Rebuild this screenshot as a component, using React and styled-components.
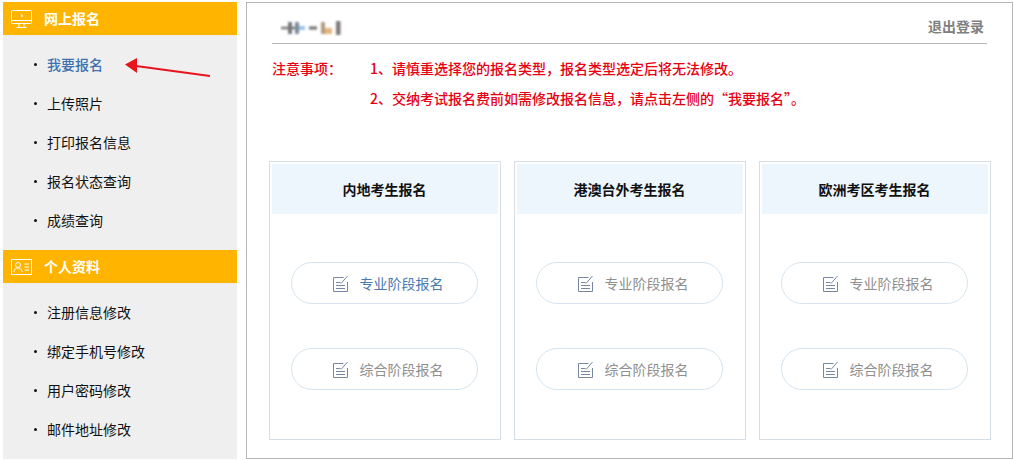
import React from "react";
import styled, { createGlobalStyle } from "styled-components";

const Global = createGlobalStyle`
  html, body {
    margin: 0;
    padding: 0;
    background: #fff;
    overflow: hidden;
    font-family: "Noto Sans CJK SC", "Liberation Sans", sans-serif;
  }
`;

const Page = styled.div`
  width: 1014px;
  height: 460px;
  box-sizing: border-box;
  padding: 2px 2px 1px 3px;
  display: flex;
  gap: 9px;
`;

const Sidebar = styled.aside`
  position: relative;
  width: 234px;
  flex: none;
  background: #efefef;
`;

const MenuHead = styled.div`
  height: 33px;
  background: #ffb400;
  display: flex;
  align-items: center;
  padding-left: 7px;
  gap: 10px;
  color: #fff;
  font-size: 14px;
  font-weight: 700;
`;

const MenuTitle = styled.span`
  margin-top: -2px;
`;

const MenuList = styled.ul`
  list-style: none;
  margin: 0;
  padding: 9px 0 11px;
`;

const MenuItem = styled.li`
  height: 39px;
  display: flex;
  align-items: center;
  padding-left: 31px;
  font-size: 14px;
  font-weight: ${(p) => (p.$active ? 500 : 400)};
  color: ${(p) => (p.$active ? "#3f72af" : "#111")};

  &::before {
    content: "";
    width: 3px;
    height: 3px;
    border-radius: 50%;
    background: #111;
    margin-right: 10px;
    margin-top: 2px;
  }
`;

const Arrow = styled.svg`
  position: absolute;
  left: 120px;
  top: 55px;
`;

const Main = styled.main`
  flex: 1;
  border: 1px solid #b5b5b5;
  box-sizing: border-box;
  padding: 0 21px 18px 22px;
  display: flex;
  flex-direction: column;
`;

const TopBar = styled.div`
  height: 41px;
  box-sizing: border-box;
  margin: 0 4px 0 3px;
  border-bottom: 1px solid #b5b5b5;
  display: flex;
  align-items: center;
  justify-content: space-between;
  padding: 6px 3px 0 8px;
`;

const BlurLogo = styled.svg`
  margin-top: 4px;
`;

const Logout = styled.span`
  font-size: 14px;
  font-weight: 700;
  color: #808080;
`;

const Notes = styled.div`
  margin: 9px 0 0 3px;
  height: 108px;
  display: grid;
  grid-template-columns: 98px 1fr;
  grid-auto-rows: 30px;
  align-content: start;
  align-items: center;
  color: #e60012;
  font-size: 14px;
  font-weight: 500;
`;

const NoteText = styled.div`
  grid-column: 2;
  line-height: 24px;
`;

const Cards = styled.div`
  flex: 1;
  display: flex;
  gap: 13px;
`;

const Card = styled.section`
  width: 232px;
  box-sizing: border-box;
  border: 1px solid #d5dde5;
  padding: 2px;
  display: flex;
  flex-direction: column;
  align-items: center;
`;

const CardTitle = styled.div`
  align-self: stretch;
  height: 50px;
  box-sizing: border-box;
  padding-right: 1px;
  background: #edf5fd;
  display: flex;
  align-items: center;
  justify-content: center;
  font-size: 14px;
  font-weight: 700;
  color: #111;
  margin-bottom: 48px;
`;

const Pill = styled.div`
  width: 187px;
  height: 42px;
  box-sizing: border-box;
  border: 1px solid #d5e4f0;
  border-radius: 21px;
  padding-left: 6px;
  display: flex;
  align-items: center;
  justify-content: center;
  gap: 11px;
  font-size: 14px;
  color: ${(p) => (p.$active ? "#4a79b0" : "#8f8f8f")};
  margin: 0 1px 44px 0;
`;

const NoteIcon = () => (
  <svg width="17" height="17" viewBox="0 0 17 17" fill="none" stroke="#7787a1" strokeWidth="1">
    <path d="M11.5 2.5H1.5V16.5H15.5V7" />
    <path d="M4 7.5H8.5M4 10.5H13M4 13.5H13" />
    <path d="M9 8.5L15.5 1" />
  </svg>
);

const ScreenIcon = () => (
  <svg width="24" height="22" viewBox="0 0 24 22" fill="none" stroke="#fff" strokeWidth="1">
    <rect x="1.5" y="2.5" width="20" height="13" rx="1" />
    <path d="M1.5 12.5H21.5M9 15.5V19M14 15.5V19M6.5 19.5H16.5" />
    <path d="M11 6L12.5 8L11.5 9" strokeWidth="1.2" />
  </svg>
);

const CardIcon = () => (
  <svg width="24" height="18" viewBox="0 0 24 18" fill="none" stroke="#fff" strokeWidth="1">
    <rect x="1.5" y="1.5" width="20" height="15" />
    <circle cx="8" cy="7" r="2.5" />
    <path d="M3.8 14C4.3 11 6 10 8 10S11.7 11 12.2 14" />
    <path d="M14.5 6H19M14.5 9H19M14.5 12H19" />
  </svg>
);

const CARDS = ["内地考生报名", "港澳台外考生报名", "欧洲考区考生报名"];

export default function App() {
  return (
    <Page>
      <Global />
      <Sidebar>
        <MenuHead>
          <ScreenIcon />
          <MenuTitle>网上报名</MenuTitle>
        </MenuHead>
        <MenuList>
          <MenuItem $active>我要报名</MenuItem>
          <MenuItem>上传照片</MenuItem>
          <MenuItem>打印报名信息</MenuItem>
          <MenuItem>报名状态查询</MenuItem>
          <MenuItem>成绩查询</MenuItem>
        </MenuList>
        <MenuHead>
          <CardIcon />
          <MenuTitle>个人资料</MenuTitle>
        </MenuHead>
        <MenuList>
          <MenuItem>注册信息修改</MenuItem>
          <MenuItem>绑定手机号修改</MenuItem>
          <MenuItem>用户密码修改</MenuItem>
          <MenuItem>邮件地址修改</MenuItem>
        </MenuList>
        <Arrow width="92" height="24" viewBox="0 0 92 24">
          <path d="M87 19L13 9" stroke="#e8141c" strokeWidth="2" />
          <path d="M2 7.5L14 1L14 16Z" fill="#e8141c" />
        </Arrow>
      </Sidebar>
      <Main>
        <TopBar>
          <BlurLogo width="64" height="16" viewBox="0 0 64 16">
            <g style={{ filter: "blur(1px)" }}>
              <path d="M1 8H21" stroke="#777" strokeWidth="2.5" />
              <rect x="8" y="2" width="4" height="12" fill="#777" />
              <rect x="15" y="2" width="4" height="12" fill="#7d8c9a" />
              <rect x="19" y="6" width="6" height="4" fill="#9cc6ea" />
              <rect x="29" y="6.5" width="8" height="3" fill="#6f6f6f" />
              <rect x="41" y="2" width="4" height="12" fill="#b39c7e" />
              <rect x="45" y="8" width="7" height="6" fill="#e2b67e" />
              <rect x="56" y="1" width="4.5" height="14" fill="#7f7878" />
            </g>
          </BlurLogo>
          <Logout>退出登录</Logout>
        </TopBar>
        <Notes>
          <div>注意事项：</div>
          <NoteText>1、请慎重选择您的报名类型，报名类型选定后将无法修改。</NoteText>
          <NoteText>2、交纳考试报名费前如需修改报名信息，请点击左侧的“我要报名”。</NoteText>
        </Notes>
        <Cards>
          {CARDS.map((title, i) => (
            <Card key={title}>
              <CardTitle>{title}</CardTitle>
              <Pill $active={i === 0}>
                <NoteIcon />
                专业阶段报名
              </Pill>
              <Pill>
                <NoteIcon />
                综合阶段报名
              </Pill>
            </Card>
          ))}
        </Cards>
      </Main>
    </Page>
  );
}
